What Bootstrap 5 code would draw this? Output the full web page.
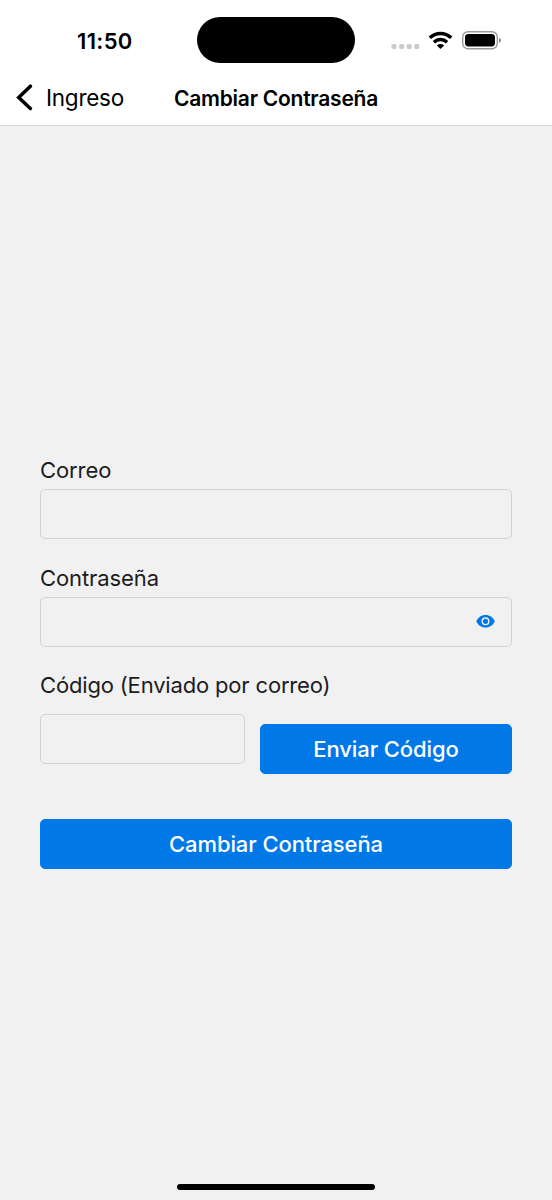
<!DOCTYPE html>
<html lang="es">
<head>
<meta charset="utf-8">
<meta name="viewport" content="width=device-width, initial-scale=1">
<title>Cambiar Contraseña</title>
<link href="https://cdn.jsdelivr.net/npm/bootstrap@5.3.0/dist/css/bootstrap.min.css" rel="stylesheet">
<style>
body { font-family: Inter, "Liberation Sans", sans-serif; background: #f1f1f1; color: #1c1c1e; }
.phone { height: 1200px; overflow: hidden; }
.app-header { height: 126px; background: #fff; border-bottom: 1px solid #d8d8d8; color: #000; }
.status-bar { height: 71px; padding: 17px 51px 0 77px; }
.side { width: 120px; height: 47px; }
.clock { font-size: 22px; font-weight: 600; letter-spacing: .35px; line-height: 48px; }
.island { width: 158px; height: 46px; background: #000; }
.title-bar { height: 54px; padding-left: 16px; }
.title-bar .back { width: 158px; gap: 13px; color: #000; font-size: 22.5px; letter-spacing: -.25px; line-height: 54px; }
.screen-title { font-size: 21px; font-weight: 600; letter-spacing: -.24px; line-height: 55px; white-space: nowrap; }
.form-area { padding: 330px 40px 0; }
.form-label { font-size: 22px; line-height: 28px; margin-bottom: 5px; letter-spacing: -.1px; }
.code-label { letter-spacing: -.17px; margin-bottom: 0; }
.form-control, .form-control:focus { height: 50px; background: transparent; border: 1px solid #d3d3d3; border-radius: 5px; box-shadow: none; }
.form-control { padding-right: 48px; }
.field { margin-bottom: 25px; }
.field + .field { margin-bottom: 24px; }
.eye { right: 16px; top: 14px; line-height: 0; color: #0078e7; }
.btn-main { --bs-btn-bg: #0078e8; --bs-btn-border-color: #0078e8; --bs-btn-color: #fff; --bs-btn-hover-bg: #006bd0; --bs-btn-hover-color: #fff; height: 50px; padding: 1px 0 0; border-radius: 5px; font-size: 22px; font-weight: 500; letter-spacing: -.1px; }
.code-row { margin: 14px 0 45px; padding-top: 1px; }
.code-input { width: 205px; }
.send { width: 252px; margin-top: 10px; }
.home-bar { width: 198px; height: 6px; background: #000; margin-bottom: 10px; }
</style>
</head>
<body>
<div class="phone d-flex flex-column">
  <header class="app-header flex-shrink-0">
    <div class="status-bar d-flex">
      <div class="side clock">11:50</div>
      <div class="island rounded-pill"></div>
      <svg class="ms-auto" width="112" height="47" viewBox="389 17 112 47" aria-hidden="true">
        <g fill="#cbcbcb"><rect x="391.5" y="44" width="5" height="5" rx="1.5"/><rect x="399.1" y="44" width="5" height="5" rx="1.5"/><rect x="406.7" y="44" width="5" height="5" rx="1.5"/><rect x="414.3" y="44" width="5" height="5" rx="1.5"/></g>
        <g fill="none" stroke="#000" stroke-width="3.4"><path d="M429.8 37.8a15.5 15.5 0 0 1 21.4 0"/><path d="M433.9 42.2a9.6 9.6 0 0 1 13.2 0"/></g>
        <path d="M436.8 45.4q3.7-2.9 7.4 0l-3.7 3.6z"/>
        <rect x="462.7" y="31.8" width="34.6" height="17" rx="5.3" fill="none" stroke="#999" stroke-width="1.4"/>
        <rect x="465" y="34.1" width="30" height="12.4" rx="3.4"/>
        <path d="M499 37.7q2 .8 2 2.6t-2 2.6z" fill="#888"/>
      </svg>
    </div>
    <nav class="title-bar d-flex">
      <a href="#" class="back d-flex align-items-center text-decoration-none">
        <svg width="17" height="28" viewBox="0 0 17 28" fill="none" stroke="#000" stroke-width="3.5" stroke-linecap="round" stroke-linejoin="miter" aria-hidden="true"><path d="M14.4 2.2 2.700 13.400l11.700 11.200"/></svg>Ingreso
      </a>
      <h1 class="screen-title m-0">Cambiar Contraseña</h1>
    </nav>
  </header>
  <main class="form-area flex-grow-1">
    <form>
      <div class="field">
        <label class="form-label d-block" for="correo">Correo</label>
        <input id="correo" type="email" class="form-control">
      </div>
      <div class="field">
        <label class="form-label d-block" for="clave">Contraseña</label>
        <div class="position-relative">
          <input id="clave" type="password" class="form-control">
          <span class="eye position-absolute"><svg width="20" height="20" viewBox="0 0 20 20" aria-hidden="true"><path fill="currentColor" d="M9.500 4C5.200 4 1.800 6.500.3 10.300c1.500 3.800 4.900 6.300 9.200 6.300s7.800-2.500 9.300-6.300C17.300 6.500 13.800 4 9.500 4z"/><circle cx="9.500" cy="10.300" r="3.300" fill="none" stroke="#f1f1f1" stroke-width="1.400"/></svg></span>
        </div>
      </div>
      <label class="form-label d-block code-label" for="codigo">Código (Enviado por correo)</label>
      <div class="code-row d-flex justify-content-between align-items-start">
        <input id="codigo" type="text" class="form-control code-input">
        <button type="button" class="btn btn-main send">Enviar Código</button>
      </div>
      <button type="submit" class="btn btn-main w-100">Cambiar Contraseña</button>
    </form>
  </main>
  <div class="home-bar rounded-pill mx-auto flex-shrink-0"></div>
</div>
<script src="https://cdn.jsdelivr.net/npm/bootstrap@5.3.0/dist/js/bootstrap.bundle.min.js"></script>
</body>
</html>
